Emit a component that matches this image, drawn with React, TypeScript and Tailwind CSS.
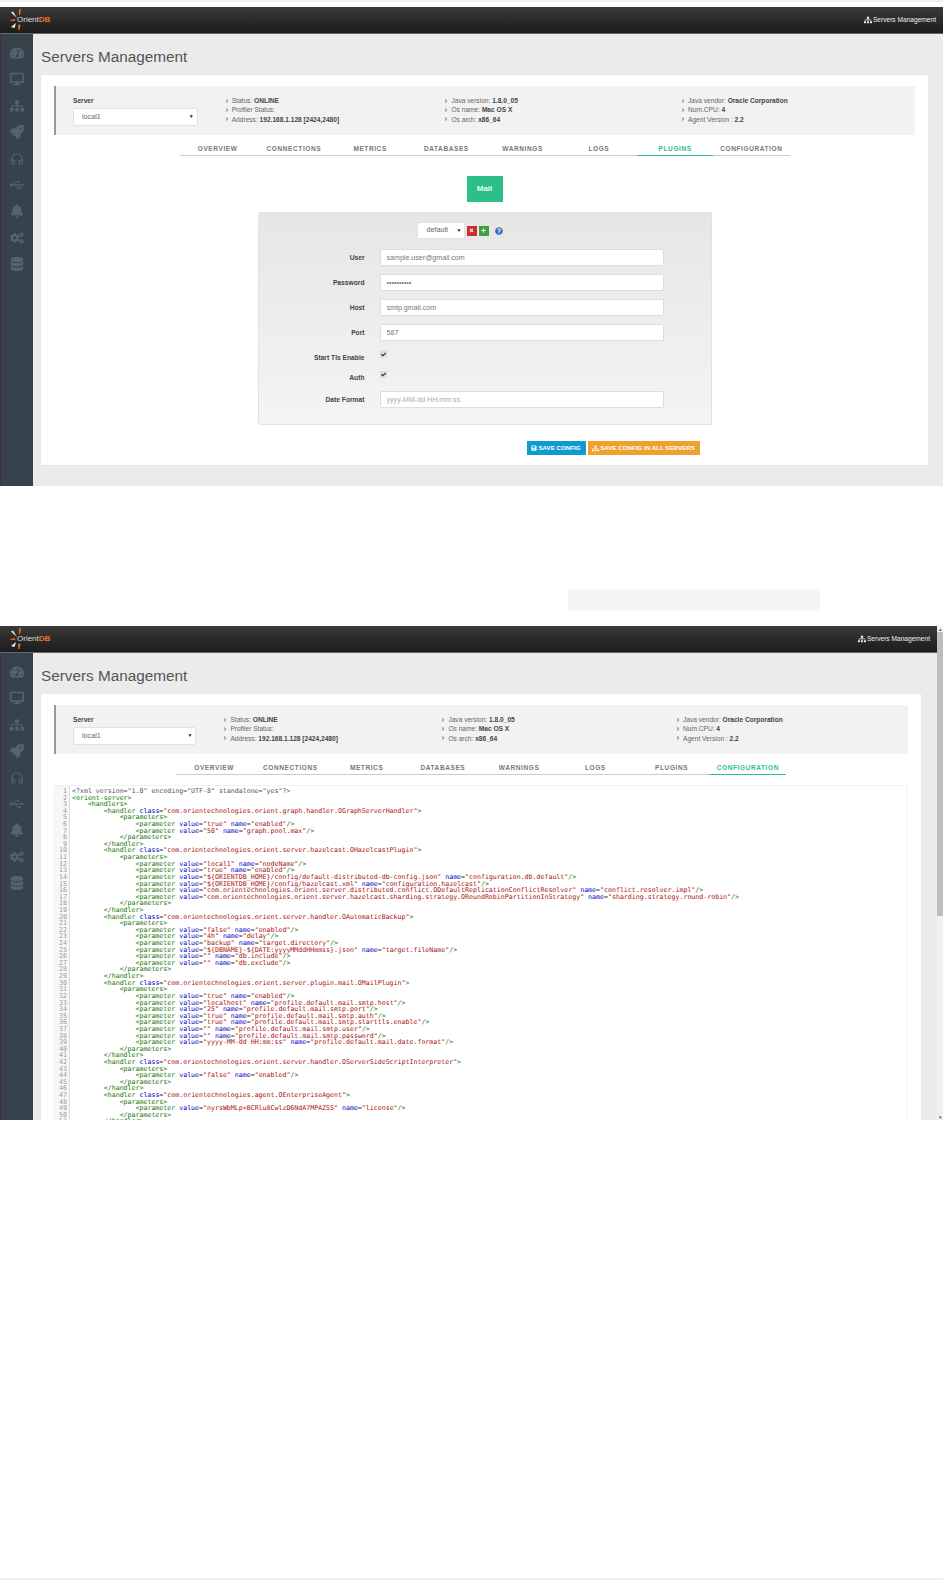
import { Headphones } from 'lucide-react';
import {
  FaAngleRight,
  FaBell,
  FaCheck,
  FaCogs,
  FaDatabase,
  FaDesktop,
  FaPlus,
  FaQuestionCircle,
  FaRocket,
  FaSave,
  FaSitemap,
  FaTachometerAlt,
  FaTimes,
  FaUsb,
} from 'react-icons/fa';

const tabs = ['Overview', 'Connections', 'Metrics', 'Databases', 'Warnings', 'Logs', 'Plugins', 'Configuration'];

const infoColumns = [
  [
    ['Status: ', 'ONLINE'],
    ['Profiler Status:', ''],
  ],
  [
    ['Java version: ', '1.8.0_05'],
    ['Os name: ', 'Mac OS X'],
    ['Os arch: ', 'x86_64'],
  ],
  [
    ['Java vendor: ', 'Oracle Corporation'],
    ['Num.CPU: ', '4'],
    ['Agent Version : ', '2.2'],
  ],
];

const sideIcons = [FaTachometerAlt, FaDesktop, FaSitemap, FaRocket, Headphones, FaUsb, FaBell, FaCogs, FaDatabase];

const param = (value: string, name: string) => `                <parameter value="${value}" name="${name}"/>`;
const open = (cls: string) => `        <handler class="com.orientechnologies.${cls}">`;
const P = '            <parameters>';
const PE = '            </parameters>';
const HE = '        </handler>';
const mail = 'profile.default.mail';

const xml = [
  '<?xml version="1.0" encoding="UTF-8" standalone="yes"?>',
  '<orient-server>',
  '    <handlers>',
  open('orient.graph.handler.OGraphServerHandler'),
  P,
  param('true', 'enabled'),
  param('50', 'graph.pool.max'),
  PE,
  HE,
  open('orient.server.hazelcast.OHazelcastPlugin'),
  P,
  param('local1', 'nodeName'),
  param('true', 'enabled'),
  param('${ORIENTDB_HOME}/config/default-distributed-db-config.json', 'configuration.db.default'),
  param('${ORIENTDB_HOME}/config/hazelcast.xml', 'configuration.hazelcast'),
  param('com.orientechnologies.orient.server.distributed.conflict.ODefaultReplicationConflictResolver', 'conflict.resolver.impl'),
  param('com.orientechnologies.orient.server.hazelcast.sharding.strategy.ORoundRobinPartitionInStrategy', 'sharding.strategy.round-robin'),
  PE,
  HE,
  open('orient.server.handler.OAutomaticBackup'),
  P,
  param('false', 'enabled'),
  param('4h', 'delay'),
  param('backup', 'target.directory'),
  param('${DBNAME}-${DATE:yyyyMMddHHmmss}.json', 'target.fileName'),
  param('', 'db.include'),
  param('', 'db.exclude'),
  PE,
  HE,
  open('orient.server.plugin.mail.OMailPlugin'),
  P,
  param('true', 'enabled'),
  param('localhost', `${mail}.smtp.host`),
  param('25', `${mail}.smtp.port`),
  param('true', `${mail}.smtp.auth`),
  param('true', `${mail}.smtp.starttls.enable`),
  param('', `${mail}.smtp.user`),
  param('', `${mail}.smtp.password`),
  param('yyyy-MM-dd HH:mm:ss', `${mail}.date.format`),
  PE,
  HE,
  open('orient.server.handler.OServerSideScriptInterpreter'),
  P,
  param('false', 'enabled'),
  PE,
  HE,
  open('agent.OEnterpriseAgent'),
  P,
  param('nyrsWbMLp+BCRlu8CwlzD6NdA7MPAZSS', 'license'),
  PE,
  HE,
];

function XmlLine({ text }: { text: string }) {
  if (text.startsWith('<?')) return <span className="text-[#555]">{text}</span>;
  const parts = text.split(/("[^"]*"|\s[a-z]+(?==)|=)/);
  return (
    <>
      {parts.map((part, i) => {
        if (part.startsWith('"')) return <span key={i} className="text-[#a11]">{part}</span>;
        if (part === '=') return <span key={i} className="text-[#333]">{part}</span>;
        if (/^\s[a-z]+$/.test(part)) return <span key={i} className="text-[#00c]">{part}</span>;
        return <span key={i} className="text-[#170]">{part}</span>;
      })}
    </>
  );
}

function Logo() {
  return (
    <div className="flex items-center">
      <svg width="11" height="27" viewBox="0 0 11 27" className="overflow-visible">
        <path d="M5 5.5 L7 4.5 L11 11 Z" fill="#eee" />
        <path d="M3 13.5 L9 12 L9 14 Z" fill="#e8742a" />
        <path d="M5 20 L10 16 L8.5 21 Z" fill="#eee" />
        <path d="M13 3 L15 1.5 L14 8 L13 8 Z" fill="#e8742a" />
        <path d="M12 18 L14.5 17.5 L13.5 23 L12.5 23 Z" fill="#e8742a" />
      </svg>
      <span className="text-[8px] text-[#ddd]">
        Orient<b className="text-[#e8742a]">DB</b>
      </span>
    </div>
  );
}

function Navbar() {
  return (
    <div className="flex h-[27px] shrink-0 items-center justify-between border-b border-[#666] bg-gradient-to-b from-[#3a3a3a] to-[#1c1c1c] pr-[7px] pl-[6px]">
      <Logo />
      <div className="flex items-center gap-[1px] text-[6.6px] text-[#eee]">
        <FaSitemap size={8} />
        <span>Servers Management</span>
      </div>
    </div>
  );
}

function Sidebar() {
  return (
    <div className="flex w-[33px] shrink-0 flex-col items-center gap-[12.4px] border-l border-[#4a2c38] bg-[#36434d] pt-[12px] text-[#58626a]">
      {sideIcons.map((Icon, i) => (
        <Icon key={i} size={14} />
      ))}
    </div>
  );
}

function FakeSelect({ value, className }: { value: string; className: string }) {
  return (
    <div className={`flex items-center justify-between rounded-[2px] border border-[#e2e2e2] bg-white text-[7.2px] text-[#666] ${className}`}>
      <span>{value}</span>
      <span className="text-[5px] text-[#222]">▼</span>
    </div>
  );
}

function ServerInfo({ address }: { address: string }) {
  const columns = [[...infoColumns[0], ['Address: ', address]], infoColumns[1], infoColumns[2]];
  return (
    <div className="grid h-[49px] grid-cols-[17.9%_26.1%_28.1%_1fr] border-l-2 border-[#9a9a9a] bg-[#f2f2f2] pt-[10px] pl-[17px]">
      <div className="pr-[26px]">
        <div className="mb-[3px] text-[6.6px] leading-[9px] font-bold text-[#444]">Server</div>
        <FakeSelect value="local1" className="h-[18px] pr-[3px] pl-[8px]" />
      </div>
      {columns.map((rows, i) => (
        <div key={i} className="text-[6.6px] leading-[9.3px] text-[#666]">
          {rows.map(([label, value]) => (
            <div key={label} className="flex items-center">
              <FaAngleRight size={6} className="mr-[2px] text-[#888]" />
              <span>
                {label}
                <b className="text-[#444]">{value}</b>
              </span>
            </div>
          ))}
        </div>
      ))}
    </div>
  );
}

function Tabs({ active }: { active: string }) {
  return (
    <div className="mx-auto grid h-[21px] w-[610px] grid-cols-8 border-b border-[#ccc]">
      {tabs.map((tab) => (
        <div
          key={tab}
          className={`-mb-px flex items-center justify-center border-b pt-[7px] text-[6.5px] font-bold tracking-[0.6px] uppercase ${
            tab === active ? 'border-[#2cbf87] text-[#2cbf87]' : 'border-transparent text-[#777]'
          }`}
        >
          {tab}
        </div>
      ))}
    </div>
  );
}

function TextRow({ label, value, type = 'text', placeholder }: { label: string; value?: string; type?: string; placeholder?: string }) {
  return (
    <div className="flex">
      <label className="w-[106px] pt-[4px] text-right text-[6.7px] leading-[9px] font-bold text-[#444]">{label}</label>
      <input
        readOnly
        type={type}
        value={value}
        placeholder={placeholder}
        className="ml-[15px] h-[17px] w-[284px] rounded-[1.5px] border border-[#ddd] bg-white px-[6px] text-[7.1px] text-[#777] outline-none placeholder:text-[#aaa]"
      />
    </div>
  );
}

function CheckRow({ label, className }: { label: string; className: string }) {
  return (
    <div className={`flex ${className}`}>
      <label className="w-[106px] pt-[2px] text-right text-[6.7px] leading-[9px] font-bold text-[#444]">{label}</label>
      <div className="ml-[15px] flex h-[7px] w-[7px] items-center justify-center rounded-[1px] bg-[#ddd] text-[#222]">
        <FaCheck size={5} />
      </div>
    </div>
  );
}

function MailForm() {
  return (
    <div className="mx-auto w-[454px]">
      <div className="h-[213px] rounded-[2px] border border-[#e2e2e2] bg-gradient-to-b from-[#e6e6e6] to-[#f4f4f4] pt-[9px]">
        <div className="ml-[158px] flex items-center">
          <FakeSelect value="default" className="h-[17px] w-[48px] pr-[2px] pl-[9px]" />
          <div className="ml-[2px] flex h-[10px] w-[10px] items-center justify-center bg-[#c9302c] text-white">
            <FaTimes size={5} />
          </div>
          <div className="ml-[2px] flex h-[10px] w-[10px] items-center justify-center bg-[#3f9f45] text-white">
            <FaPlus size={5} />
          </div>
          <FaQuestionCircle size={8} className="ml-[6px] text-[#2b74b8]" />
        </div>
        <div className="mt-[10px] flex flex-col gap-[8px]">
          <TextRow label="User" value="sample.user@gmail.com" />
          <TextRow label="Password" type="password" value="1234567890" />
          <TextRow label="Host" value="smtp.gmail.com" />
          <TextRow label="Port" value="587" />
        </div>
        <CheckRow label="Start Tls Enable" className="mt-[10px] h-[20px]" />
        <CheckRow label="Auth" className="h-[20px]" />
        <TextRow label="Date Format" placeholder="yyyy-MM-dd HH:mm:ss" />
      </div>
      <div className="mt-[16px] flex justify-end gap-[2px] pr-[12px] text-[6.2px] font-bold text-white uppercase">
        <div className="flex h-[14px] w-[59px] items-center justify-center gap-[1px] bg-[#0f9bcf]">
          <FaSave size={6} />
          Save config
        </div>
        <div className="flex h-[14px] w-[112px] items-center justify-center gap-[1px] bg-[#efa12f]">
          <FaSitemap size={7} />
          Save config in all servers
        </div>
      </div>
    </div>
  );
}

function CodeView() {
  return (
    <div className="mt-[10px] flex h-[400px] border border-[#f2f2f2] font-['DejaVu_Sans_Mono',monospace] text-[6.6px] leading-[6.61px] whitespace-pre">
      <div className="w-[15px] shrink-0 border-r border-[#ddd] bg-[#f7f7f7] pt-[2px] pr-[2px] text-right text-[#999]">
        {xml.map((_, i) => (
          <div key={i}>{i + 1}</div>
        ))}
      </div>
      <div className="pt-[2px] pl-[2px]">
        {xml.map((line, i) => (
          <div key={i}>
            <XmlLine text={line} />
          </div>
        ))}
      </div>
    </div>
  );
}

function Screen({
  active,
  address,
  frame,
  children,
}: {
  active: string;
  address: string;
  frame: string;
  children: React.ReactNode;
}) {
  return (
    <div className="flex min-w-0 flex-1 flex-col">
      <Navbar />
      <div className="flex min-h-0 flex-1">
        <Sidebar />
        <div className={`flex min-w-0 flex-1 flex-col overflow-hidden bg-[#ebebeb] pl-[8px] ${frame}`}>
          <h1 className="h-[41px] shrink-0 pt-[13px] text-[15.3px] leading-[20px] text-[#555]">Servers Management</h1>
          <div className="flex-1 bg-white px-[13px] pt-[11px] shadow-[0_0_1px_#ddd]">
            <ServerInfo address={address} />
            <Tabs active={active} />
            {children}
          </div>
        </div>
      </div>
    </div>
  );
}

export default function App() {
  return (
    <div className="flex h-[1580px] w-[943px] flex-col overflow-hidden bg-white font-['Liberation_Sans',Arial,sans-serif]">
      <div className="h-[2px] shrink-0 bg-[#f0f0f0]" />
      <div className="mt-[5px] flex h-[479px] shrink-0">
        <Screen active="Plugins" address="192.168.1.128 [2424,2480]" frame="pr-[15px] pb-[21px]">
          <div className="mx-auto mt-[20px] mb-[10px] flex h-[26px] w-[36px] items-center justify-center bg-[#2cbf87] text-[8px] font-bold text-[#e8fff5]">
            Mail
          </div>
          <MailForm />
        </Screen>
      </div>
      <div className="mt-[103px] ml-[568px] h-[22px] w-[252px] shrink-0 bg-[#f5f5f5]" />
      <div className="mt-[15px] flex h-[494px] shrink-0">
        <Screen active="Configuration" address="192.168.1.128 [2424,2480]" frame="pr-[16px]">
          <CodeView />
        </Screen>
        <div className="flex w-[6px] shrink-0 flex-col bg-[#f0f0f0] text-center text-[5px] leading-[6px] text-[#555]">
          <span>▴</span>
          <div className="h-[284px] bg-[#bdbdbd]" />
          <span className="mt-auto">▾</span>
        </div>
      </div>
      <div className="mt-auto h-[2px] shrink-0 bg-[#f0f0f0]" />
    </div>
  );
}
